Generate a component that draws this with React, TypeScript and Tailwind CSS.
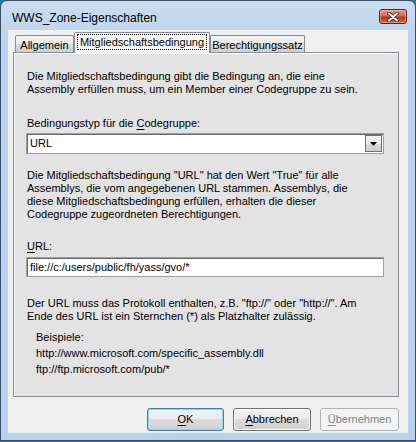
import React from "react";

function Accel({ children }: { children: React.ReactNode }) {
    return <span className="underline underline-offset-[2px]">{children}</span>;
}

function CloseButton() {
    return (
        <div className="flex items-center justify-center w-[28px] h-[15px] rounded-[3px] border border-[#5e1e16] bg-[linear-gradient(#e39a89,#cf6a55_45%,#b8341d_55%,#d06a52)] shadow-[inset_0_0_0_1px_rgba(255,210,200,0.45)]">
            <svg width="12" height="10" viewBox="0 0 12 10">
                <path d="M2 1.5 L10 8.5 M10 1.5 L2 8.5" stroke="#4a1a14" strokeWidth="3.6" strokeLinecap="round" />
                <path d="M2 1.5 L10 8.5 M10 1.5 L2 8.5" stroke="#ffffff" strokeWidth="2" strokeLinecap="round" />
            </svg>
        </div>
    );
}

function Tab({ label, active, width }: { label: string; active?: boolean; width: string }) {
    if (active) {
        return (
            <div className={`${width} h-[21px] -mb-px relative z-10 flex items-start justify-center pt-[2px] border border-b-0 border-[#898c95] rounded-t-[2px] bg-[#fbfbfb]`}>
                <span className="px-[2px] leading-[14px] outline outline-1 outline-dotted outline-black">{label}</span>
            </div>
        );
    }
    return (
        <div className={`${width} h-[17px] flex items-center justify-center border border-b-0 border-[#898c95] rounded-t-[2px] bg-[linear-gradient(#f3f3f3,#ebebeb_50%,#dddddd_50%,#cfcfcf)]`}>
            <span className="leading-[14px] pt-[1px]">{label}</span>
        </div>
    );
}

function Button({ children, width, kind }: { children: React.ReactNode; width: string; kind?: "default" | "disabled" }) {
    let cls = "border-[#707070] bg-[linear-gradient(#f2f2f2,#ebebeb_50%,#dddddd_50%,#cfcfcf)] shadow-[inset_0_0_0_1px_#fcfcfc] text-black";
    if (kind === "default") {
        cls = "border-[#3c7fb1] bg-[linear-gradient(#f2f2f2,#ebebeb_50%,#dddddd_50%,#cfcfcf)] shadow-[inset_0_0_0_1px_#8fd3f5] text-black";
    }
    if (kind === "disabled") {
        cls = "border-[#adb2b5] bg-[#f4f4f4] text-[#838383]";
    }
    return (
        <div className={`${width} h-[23px] flex items-center justify-center rounded-[3px] border ${cls}`}>
            {children}
        </div>
    );
}

export default function App() {
    return (
        <div className="w-[416px] h-[442px] bg-[#1f7f9a] text-[11px] text-black font-['Liberation_Sans',Arial,sans-serif]">
            <div className="flex flex-col w-[416px] h-[441px] rounded-t-[7px] border border-[#3b4f66] bg-[linear-gradient(#cadcf0,#bcd3ec_10%,#b9d1ea)]">
                {/* title bar */}
                <div className="flex h-[29px] pl-[11px] pr-[8px]">
                    <div className="flex-1 pt-[9px] text-[12px] leading-[16px] text-black">WWS_Zone-Eigenschaften</div>
                    <div className="pt-[8px]">
                        <CloseButton />
                    </div>
                </div>

                {/* client area */}
                <div className="mx-[7px] h-[403px] bg-[#f0f0f0] flex flex-col">
                    {/* tab strip */}
                    <div className="flex items-end h-[22px] pl-[7px]">
                        <Tab label="Allgemein" width="w-[59px]" />
                        <Tab label="Mitgliedschaftsbedingung" width="w-[136px]" active />
                        <Tab label="Berechtigungssatz" width="w-[95px]" />
                    </div>

                    {/* tab page */}
                    <div className="ml-[5px] w-[386px] h-[345px] border border-[#898c95] shadow-[inset_1px_1px_0_#ffffff] bg-[#e3e3e3] leading-[13px]">
                        <div className="pl-[13px] pt-[17px]">
                            <p>Die Mitgliedschaftsbedingung gibt die Bedingung an, die eine</p>
                            <p>Assembly erfüllen muss, um ein Member einer Codegruppe zu sein.</p>
                        </div>

                        <div className="pl-[13px] mt-[21px]">
                            Bedingungstyp für die <Accel>C</Accel>odegruppe:
                        </div>

                        <div className="ml-[12px] mt-[3px] w-[358px] h-[21px] flex items-center border border-[#a0a0a0] bg-white shadow-[inset_1px_1px_0_#696969]">
                            <span className="flex-1 pl-[3px]">URL</span>
                            <div className="mr-[1px] w-[17px] h-[17px] flex items-center justify-center border border-[#707070] bg-[linear-gradient(#f2f2f2,#ebebeb_50%,#dddddd_50%,#cfcfcf)]">
                                <svg width="7" height="4" viewBox="0 0 7 4">
                                    <path d="M0 0 H7 L3.5 4 Z" fill="#000000" />
                                </svg>
                            </div>
                        </div>

                        <div className="pl-[13px] mt-[15px]">
                            <p>Die Mitgliedschaftsbedingung "URL" hat den Wert "True" für alle</p>
                            <p>Assemblys, die vom angegebenen URL stammen. Assemblys, die</p>
                            <p>diese Mitgliedschaftsbedingung erfüllen, erhalten die dieser</p>
                            <p>Codegruppe zugeordneten Berechtigungen.</p>
                        </div>

                        <div className="pl-[13px] mt-[19px]">
                            <Accel>U</Accel>RL:
                        </div>

                        <div className="ml-[12px] mt-[4px] w-[358px] h-[20px] flex items-center border border-[#a0a0a0] bg-white shadow-[inset_1px_1px_0_#696969]">
                            <span className="pl-[3px]">file://c:/users/public/fh/yass/gvo/*</span>
                        </div>

                        <div className="pl-[13px] mt-[20px]">
                            <p>Der URL muss das Protokoll enthalten, z.B. "ftp://" oder "http://". Am</p>
                            <p>Ende des URL ist ein Sternchen (*) als Platzhalter zulässig.</p>
                        </div>

                        <div className="pl-[22px] mt-[6px] leading-[16px]">
                            <p>Beispiele:</p>
                            <p>http://www.microsoft.com/specific_assembly.dll</p>
                            <p>ftp://ftp.microsoft.com/pub/*</p>
                        </div>
                    </div>

                    {/* buttons */}
                    <div className="flex justify-end gap-[9px] pr-[9px] mt-[11px]">
                        <Button width="w-[77px]" kind="default">
                            <Accel>O</Accel>K
                        </Button>
                        <Button width="w-[78px]">
                            <Accel>A</Accel>bbrechen
                        </Button>
                        <Button width="w-[79px]" kind="disabled">
                            <Accel>Ü</Accel>bernehmen
                        </Button>
                    </div>
                </div>
            </div>
        </div>
    );
}
